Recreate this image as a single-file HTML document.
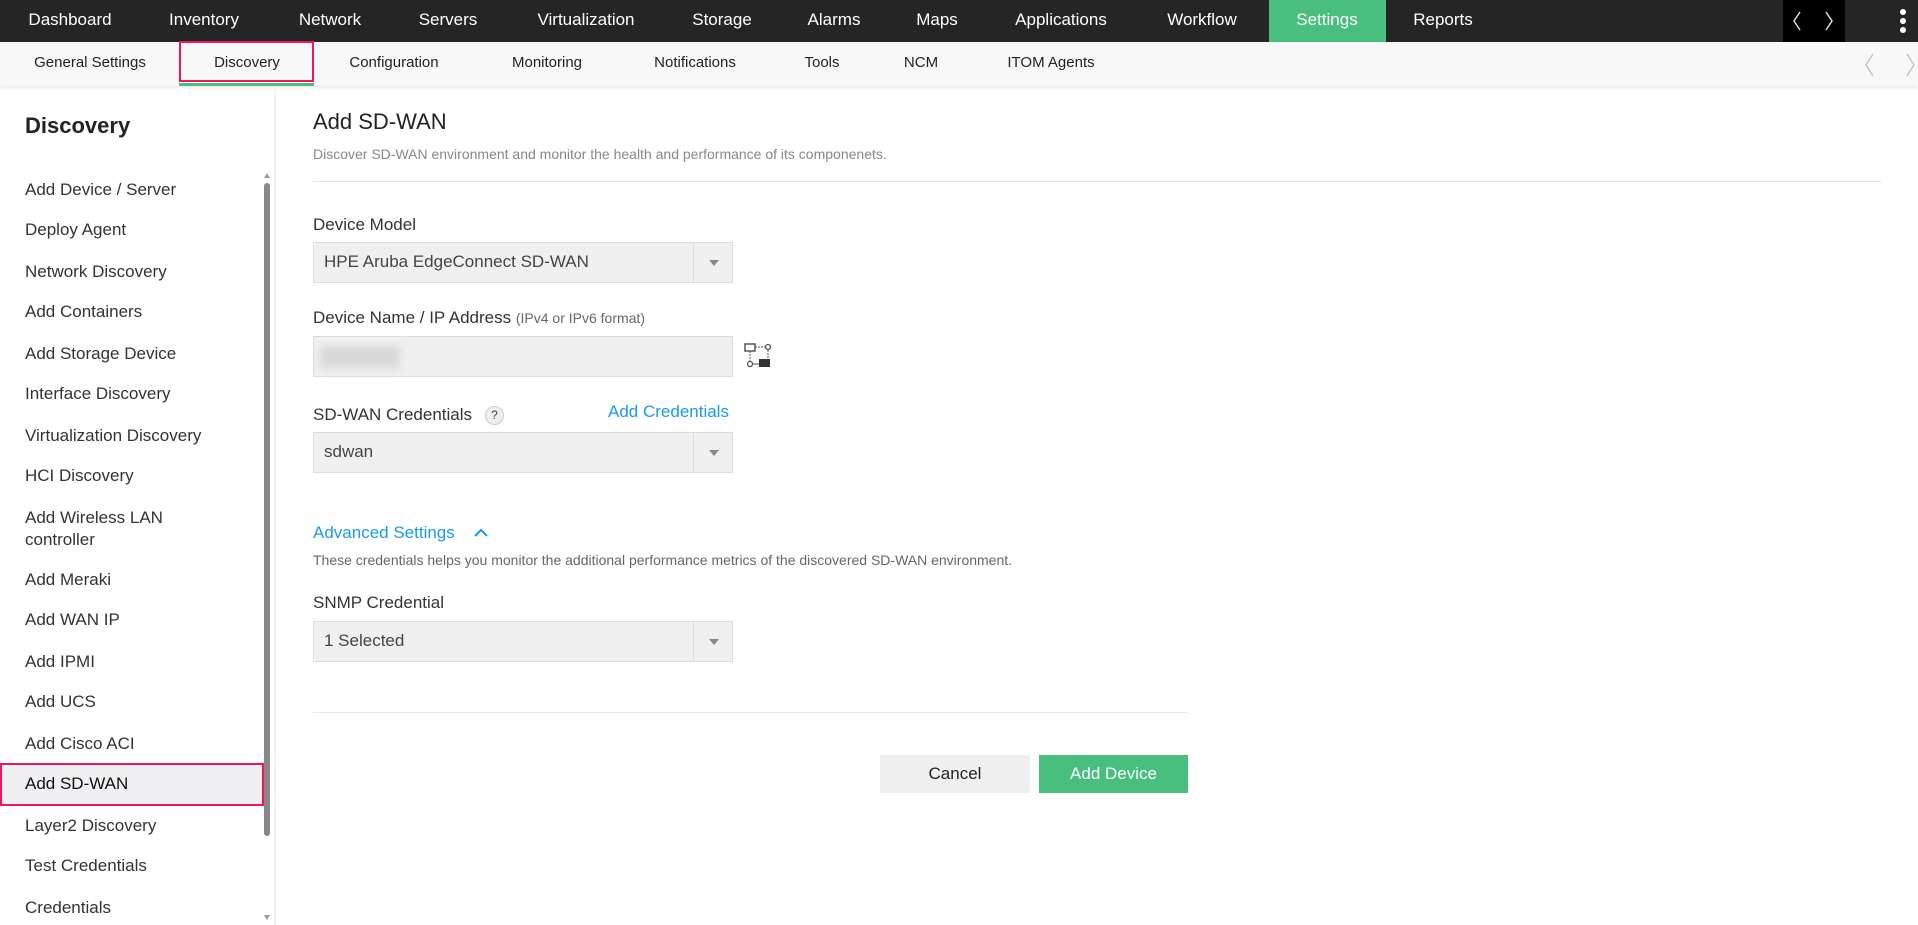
<!DOCTYPE html>
<html><head><meta charset="utf-8"><style>
*{margin:0;padding:0;box-sizing:border-box}
body{width:1918px;height:925px;overflow:hidden;background:#fff;font-family:"Liberation Sans",sans-serif;color:#222;position:relative}
.a{position:absolute;white-space:nowrap}
.b{position:absolute}
#top{position:absolute;left:0;top:0;width:1918px;height:42px;background:#252525}
#top .a{color:#fff;font-size:17px;top:10px;transform:translateX(-50%)}
#sub{position:absolute;left:0;top:42px;width:1918px;height:44px;background:#f8f8f8;box-shadow:0 2px 3px rgba(0,0,0,.08)}
#sub .a{font-size:15px;top:12px;color:#222;transform:translateX(-50%)}
.side{font-size:17px;left:25px;color:#333;line-height:22px}
.lbl{font-size:17px;color:#333}
.sel{position:absolute;left:313px;width:420px;height:41px;background:#f0f0f0;border:1px solid #ddd;font-size:17px;color:#444;padding:9px 10px}
.sel .dd{position:absolute;right:0;top:0;width:39px;height:39px;border-left:1px solid #ddd}
.sel .dd:after{content:"";position:absolute;left:15px;top:17px;border:5px solid transparent;border-top:6px solid #888}
</style></head><body>
<div id="top">
<div class="a" style="left:70px">Dashboard</div>
<div class="a" style="left:204px">Inventory</div>
<div class="a" style="left:330px">Network</div>
<div class="a" style="left:448px">Servers</div>
<div class="a" style="left:586px">Virtualization</div>
<div class="a" style="left:722px">Storage</div>
<div class="a" style="left:834px">Alarms</div>
<div class="a" style="left:937px">Maps</div>
<div style="position:absolute;left:1269px;top:0;width:117px;height:42px;background:#48be7f"></div>
<div class="a" style="left:1061px">Applications</div>
<div class="a" style="left:1202px">Workflow</div>
<div class="a" style="left:1327px">Settings</div>
<div class="a" style="left:1443px">Reports</div>
<div style="position:absolute;left:1783px;top:0;width:62px;height:42px;background:#000"></div>
<svg class="b" style="left:1790px;top:10px" width="50" height="22"><path d="M10 2 L4 11 L10 20 M36 2 L42 11 L36 20" stroke="#ddd" stroke-width="1.5" fill="none"/></svg>
<svg class="b" style="left:1898px;top:8px" width="10" height="28"><circle cx="5" cy="4" r="3" fill="#fff"/><circle cx="5" cy="13" r="3" fill="#fff"/><circle cx="5" cy="22" r="3" fill="#fff"/></svg>
</div>
<div id="sub">
<div class="a" style="left:90px">General Settings</div>
<div class="a" style="left:247px">Discovery</div>
<div class="a" style="left:394px">Configuration</div>
<div class="a" style="left:547px">Monitoring</div>
<div class="a" style="left:695px">Notifications</div>
<div class="a" style="left:822px">Tools</div>
<div class="a" style="left:921px">NCM</div>
<div class="a" style="left:1051px">ITOM Agents</div>
<svg class="b" style="left:1860px;top:9px" width="58" height="28"><path d="M13 3 L6 14 L13 25 M47 3 L54 14 L47 25" stroke="#bbb" stroke-width="1.2" fill="none"/></svg>
</div>
<div style="position:absolute;left:179px;top:41px;width:135px;height:41px;border:2px solid #f0185a"></div>
<div style="position:absolute;left:179px;top:83px;width:135px;height:3px;background:#48be7f"></div>
<div style="position:absolute;left:274px;top:86px;width:2px;height:839px;background:#f3f3f3"></div>
<div class="a" style="left:25px;top:113px;font-size:22px;font-weight:bold;color:#222">Discovery</div>
<div style="position:absolute;left:264px;top:183px;width:6px;height:653px;background:#888;border-radius:3px"></div>
<div class="a" style="left:264px;top:170px;border:3px solid transparent;border-bottom:5px solid #999"></div>
<div class="a" style="left:264px;top:915px;border:3px solid transparent;border-top:5px solid #999"></div>
<div style="position:absolute;left:0;top:763px;width:264px;height:43px;background:#f0f0f2;border:2px solid #f0185a"></div>
<div class="a side" style="top:179px">Add Device / Server</div>
<div class="a side" style="top:219px">Deploy Agent</div>
<div class="a side" style="top:261px">Network Discovery</div>
<div class="a side" style="top:301px">Add Containers</div>
<div class="a side" style="top:343px">Add Storage Device</div>
<div class="a side" style="top:383px">Interface Discovery</div>
<div class="a side" style="top:425px">Virtualization Discovery</div>
<div class="a side" style="top:465px">HCI Discovery</div>
<div class="a side" style="top:507px">Add Wireless LAN<br>controller</div>
<div class="a side" style="top:569px">Add Meraki</div>
<div class="a side" style="top:609px">Add WAN IP</div>
<div class="a side" style="top:651px">Add IPMI</div>
<div class="a side" style="top:691px">Add UCS</div>
<div class="a side" style="top:733px">Add Cisco ACI</div>
<div class="a side" style="top:773px;color:#111">Add SD-WAN</div>
<div class="a side" style="top:815px">Layer2 Discovery</div>
<div class="a side" style="top:855px">Test Credentials</div>
<div class="a side" style="top:897px">Credentials</div>

<div class="a" style="left:313px;top:109px;font-size:22px;color:#222">Add SD-WAN</div>
<div class="a" style="left:313px;top:146px;font-size:14px;color:#888">Discover SD-WAN environment and monitor the health and performance of its componenets.</div>
<div style="position:absolute;left:313px;top:181px;width:1569px;height:1px;background:#e4e4e4"></div>
<div class="a lbl" style="left:313px;top:215px">Device Model</div>
<div class="sel" style="top:242px">HPE Aruba EdgeConnect SD-WAN<div class="dd"></div></div>
<div class="a lbl" style="left:313px;top:308px">Device Name / IP Address <span style="font-size:14px;color:#666">(IPv4 or IPv6 format)</span></div>
<div class="sel" style="top:336px"><div style="width:80px;height:22px;background:#d8d8d8;filter:blur(4px);margin-left:-4px"></div></div>
<svg class="b" style="left:744px;top:342px" width="30" height="28"><rect x="1" y="2" width="10" height="7" fill="none" stroke="#555" stroke-width="1.5"/><line x1="6" y1="9" x2="6" y2="20" stroke="#555" stroke-dasharray="2 1"/><line x1="11" y1="5" x2="21" y2="5" stroke="#555" stroke-dasharray="2 1"/><circle cx="24" cy="5" r="2.5" fill="none" stroke="#555" stroke-width="1.3"/><line x1="24" y1="8" x2="24" y2="17" stroke="#555" stroke-dasharray="2 1"/><circle cx="6" cy="22" r="2.5" fill="none" stroke="#555" stroke-width="1.3"/><line x1="9" y1="22" x2="15" y2="22" stroke="#555"/><rect x="15" y="17" width="11" height="8" fill="#333"/></svg>
<div class="a lbl" style="left:313px;top:405px">SD-WAN Credentials</div>
<div class="a" style="left:485px;top:406px;width:19px;height:19px;border-radius:50%;background:#eee;border:1px solid #ccc;font-size:12px;text-align:center;line-height:17px;color:#444">?</div>
<div class="a" style="left:608px;top:402px;font-size:17px;color:#1a9be6">Add Credentials</div>
<div class="sel" style="top:432px">sdwan<div class="dd"></div></div>
<div class="a" style="left:313px;top:523px;font-size:17px;color:#1a9be6">Advanced Settings</div>
<svg class="b" style="left:473px;top:527px" width="16" height="12"><path d="M2 9 L8 3 L14 9" stroke="#1a9be6" stroke-width="2" fill="none"/></svg>
<div class="a" style="left:313px;top:552px;font-size:14px;color:#666">These credentials helps you monitor the additional performance metrics of the discovered SD-WAN environment.</div>
<div class="a lbl" style="left:313px;top:593px">SNMP Credential</div>
<div class="sel" style="top:621px">1 Selected<div class="dd"></div></div>
<div style="position:absolute;left:313px;top:712px;width:875px;height:1px;background:#e8e8e8"></div>
<div class="a" style="left:880px;top:755px;width:150px;height:38px;background:#f0f0f0;font-size:17px;text-align:center;line-height:38px;color:#222">Cancel</div>
<div class="a" style="left:1039px;top:755px;width:149px;height:38px;background:#48be7f;font-size:17px;text-align:center;line-height:38px;color:#fff">Add Device</div>
</body></html>
